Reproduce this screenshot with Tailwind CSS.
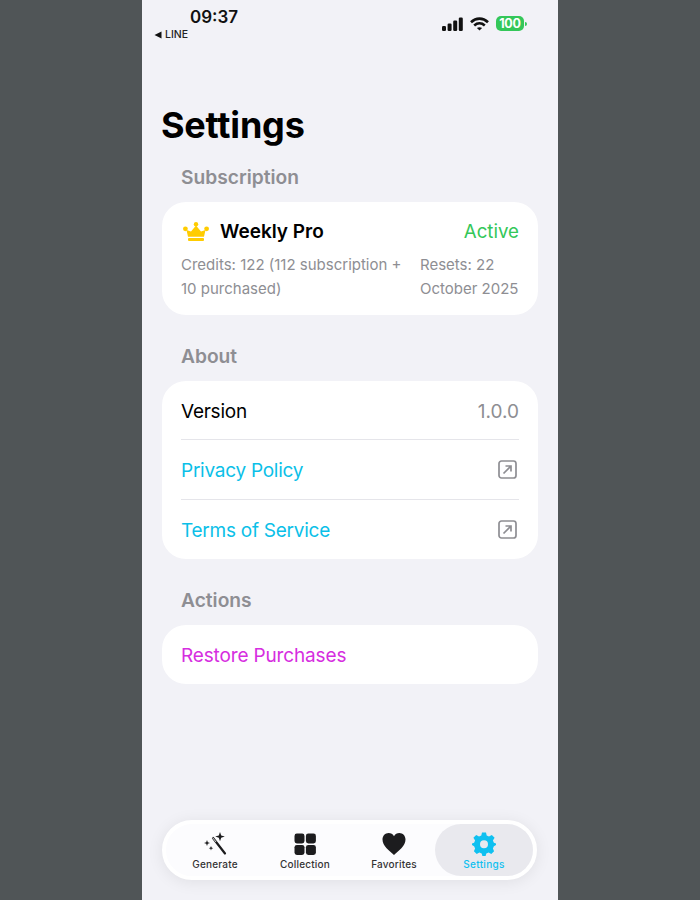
<!DOCTYPE html>
<html>
<head>
<meta charset="utf-8">
<script src="https://cdn.jsdelivr.net/npm/@tailwindcss/browser@4"></script>
</head>
<body class="bg-[#505557] font-['Inter','Liberation_Sans',sans-serif]">
<div class="flex justify-center h-[900px] overflow-hidden">
  <div class="relative w-[416px] h-[900px] bg-[#f2f2f7] px-5">
    <!-- status bar -->
    <div class="relative -mx-5 h-[45px]">
      <div class="absolute left-[48px] top-[7px] text-[17px] leading-[21px] font-semibold text-[#111]">09:37</div>
      <div class="absolute left-[12px] top-[28px] flex items-center gap-[3px] text-[10.5px] leading-[14px] font-medium text-[#222]">
        <svg width="8" height="8" viewBox="0 0 8 8"><path d="M0.5 4 L7.5 0.5 V7.5 Z" fill="#111"/></svg>
        <span>LINE</span>
      </div>
      <div class="absolute left-[300px] top-[16px] flex items-center gap-[7px]">
        <svg width="21" height="14" viewBox="0 0 21 14" fill="#111"><rect x="0" y="9" width="4" height="5" rx="1.2"/><rect x="5.6" y="6.5" width="4" height="7.5" rx="1.2"/><rect x="11.2" y="3.5" width="4" height="10.5" rx="1.2"/><rect x="16.8" y="0.5" width="4" height="13.5" rx="1.2"/></svg>
        <svg width="19" height="14" viewBox="0 0 19 14" fill="none" stroke="#111" stroke-width="2.6"><path d="M1 5.2 C6 0.4 13 0.4 18 5.2"/><path d="M4.2 8.4 C7.4 5.6 11.6 5.6 14.8 8.4"/><path d="M9.5 13.6 L6.9 11 C8.4 9.9 10.6 9.9 12.1 11 Z" fill="#111" stroke="none"/></svg>
        <div class="flex items-center gap-[1px]">
          <div class="w-[28px] h-[15px] rounded-[5px] bg-[#34c759] text-white text-[12.5px] leading-[15px] font-bold text-center tracking-[-0.2px]">100</div>
          <div class="w-[1.5px] h-[4px] rounded-r-sm bg-[#34c759]"></div>
        </div>
      </div>
    </div>

    <h1 class="mt-[57px] -ml-[1px] text-[36px] leading-[46px] font-bold text-black tracking-[-0.2px]">Settings</h1>

    <h2 class="mt-[17px] px-[19px] text-[19.2px] leading-[24px] font-semibold text-[#8e8e93]">Subscription</h2>
    <section class="mt-[13px] bg-white rounded-[24px] px-[19px] pt-[16px] h-[113px]">
      <div class="flex items-center justify-between h-[27px]">
        <div class="flex items-center gap-[11px]">
          <svg width="26" height="19" viewBox="0 0 26 19" class="ml-[2px]" fill="#ffcc00"><circle cx="13" cy="2.2" r="2.2"/><circle cx="2.4" cy="6.8" r="2.4"/><circle cx="23.6" cy="6.8" r="2.4"/><path d="M3.5 8 L8 9.5 L13 3.5 L18 9.5 L22.5 8 L21 14.8 H5 Z"/><rect x="5" y="16" width="16" height="3" rx="1"/></svg>
          <span class="text-[19px] leading-[27px] font-semibold text-black">Weekly Pro</span>
        </div>
        <span class="text-[18.7px] leading-[27px] text-[#34c759]">Active</span>
      </div>
      <div class="mt-[8px] flex justify-between text-[15px] leading-[24px] text-[#8e8e93]">
        <p class="w-[228px]">Credits: 122 (112 subscription + 10 purchased)</p>
        <p class="w-[99px] whitespace-nowrap"><span class="block">Resets: 22</span><span class="block">October 2025</span></p>
      </div>
    </section>

    <h2 class="mt-[29px] px-[19px] text-[19.2px] leading-[24px] font-semibold text-[#8e8e93]">About</h2>
    <section class="mt-[13px] bg-white rounded-[24px] px-[19px]">
      <div class="h-[59px] flex items-center justify-between border-b border-[#e5e5ea]">
        <span class="pt-[4px] text-[19px] tracking-[-0.25px] text-black">Version</span>
        <span class="pt-[4px] text-[19px] text-[#8e8e93]">1.0.0</span>
      </div>
      <div class="h-[60px] flex items-center justify-between border-b border-[#e5e5ea]">
        <span class="pt-[4px] text-[19px] tracking-[-0.25px] text-[#0bbfe8]">Privacy Policy</span>
        <svg width="19" height="19" viewBox="0 0 19 19" class="mr-[2px]" fill="none" stroke="#8e8e93" stroke-width="1.7"><rect x="1" y="1" width="17" height="17" rx="2.5"/><path d="M5.5 13.5 L13 6 M7.5 6 H13 V11.5"/></svg>
      </div>
      <div class="h-[59px] flex items-center justify-between">
        <span class="pt-[4px] text-[19px] tracking-[-0.25px] text-[#0bbfe8]">Terms of Service</span>
        <svg width="19" height="19" viewBox="0 0 19 19" class="mr-[2px]" fill="none" stroke="#8e8e93" stroke-width="1.7"><rect x="1" y="1" width="17" height="17" rx="2.5"/><path d="M5.5 13.5 L13 6 M7.5 6 H13 V11.5"/></svg>
      </div>
    </section>

    <h2 class="mt-[29px] px-[19px] text-[19.2px] leading-[24px] font-semibold text-[#8e8e93]">Actions</h2>
    <section class="mt-[13px] bg-white rounded-[24px] px-[19px] h-[59px] flex items-center">
      <span class="pt-[4px] text-[19px] tracking-[-0.15px] text-[#d62ee0]">Restore Purchases</span>
    </section>

    <!-- tab bar -->
    <nav class="absolute left-[20px] top-[820px] w-[375px] h-[60px] rounded-full bg-[#fcfcfe] border-[4px] border-white shadow-[0_2px_16px_rgba(0,0,0,0.08)] flex items-stretch pl-[4px]">
      <div class="w-[90px] flex flex-col items-center pt-[8px] text-[#1c1c1e]">
        <svg width="24" height="24" viewBox="0 0 24 24"><path d="M10 6 L22 21.5" stroke="#1c1c1e" stroke-width="2.2" stroke-linecap="round"/><path d="M9.5 5.5 L13 10" stroke="#fcfcfe" stroke-width="0.8"/><path d="M17 0 L18.2 3.4 L21.8 4.6 L18.2 5.8 L17 9.2 L15.8 5.8 L12.2 4.6 L15.8 3.4 Z" fill="#1c1c1e"/><path d="M4 8 L4.8 10.2 L7 11 L4.8 11.8 L4 14 L3.2 11.8 L1 11 L3.2 10.2 Z" fill="#1c1c1e"/><path d="M8 14 L8.6 15.6 L10.2 16.2 L8.6 16.8 L8 18.4 L7.4 16.8 L5.8 16.2 L7.4 15.6 Z" fill="#1c1c1e"/></svg>
        <span class="mt-[1px] text-[10px] leading-[14px] font-medium tracking-[0.2px] text-[#333]">Generate</span>
      </div>
      <div class="w-[90px] flex flex-col items-center pt-[8px] text-[#1c1c1e]">
        <svg width="24" height="24" viewBox="0 0 24 24" fill="#1c1c1e"><rect x="1.5" y="1.5" width="10" height="10" rx="2.4"/><rect x="12.9" y="1.5" width="10" height="10" rx="2.4"/><rect x="1.5" y="12.9" width="10" height="10" rx="2.4"/><rect x="12.9" y="12.9" width="10" height="10" rx="2.4"/></svg>
        <span class="mt-[1px] text-[10px] leading-[14px] font-medium tracking-[0.2px] text-[#333]">Collection</span>
      </div>
      <div class="w-[85px] pl-[3px] flex flex-col items-center pt-[8px] text-[#1c1c1e]">
        <svg width="24" height="24" viewBox="0 0 24 24" fill="#1c1c1e"><path d="M12 23 C7 18.5 0.5 14 0.5 7.5 C0.5 3.8 3.3 1 6.6 1 C8.9 1 10.9 2.2 12 4.2 C13.1 2.2 15.1 1 17.4 1 C20.7 1 23.5 3.8 23.5 7.5 C23.5 14 17 18.5 12 23 Z"/></svg>
        <span class="mt-[1px] text-[10px] leading-[14px] font-medium tracking-[0.2px] text-[#333]">Favorites</span>
      </div>
      <div class="w-[98px] flex flex-col items-center pt-[8px] rounded-full bg-[#e9e9ee] text-[#0fc0f0]">
        <svg width="24" height="24" viewBox="0 0 24 24"><path fill="#0fc0f0" fill-rule="evenodd" d="M10 0.5 H14 L14.7 3.6 L17 4.6 L19.8 2.9 L22.6 5.7 L20.9 8.4 L21.9 10.8 L24 11.4 V13 L21.9 14.2 L20.9 16.6 L22.1 19.3 L19.3 22.1 L16.6 20.5 L14.3 21.4 L13.6 24 H10.4 L9.7 21.4 L7.4 20.5 L4.7 22.1 L1.9 19.3 L3.1 16.6 L2.1 14.2 L0 13 V11.4 L2.1 10.8 L3.1 8.4 L1.4 5.7 L4.2 2.9 L7 4.6 L9.3 3.6 Z M12 8.2 A4 4 0 1 0 12 16.2 A4 4 0 1 0 12 8.2 Z"/></svg>
        <span class="mt-[1px] text-[10px] leading-[14px] font-medium tracking-[0.3px]">Settings</span>
      </div>
    </nav>
  </div>
</div>
</body>
</html>
